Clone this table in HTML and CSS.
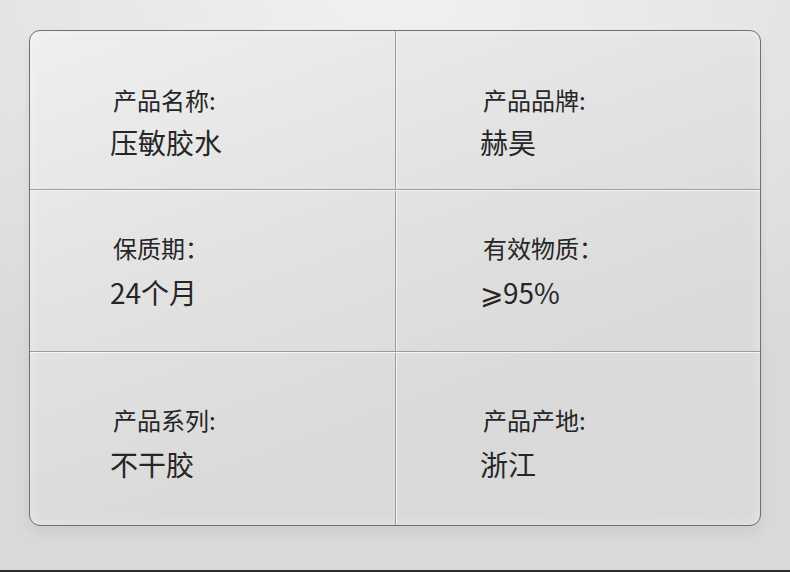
FILE: index.html
```html
<!DOCTYPE html>
<html lang="zh">
<head>
<meta charset="utf-8">
<link rel="stylesheet" href="styles.css">
</head>
<body>
<div class="page">
  <div class="card">
    <div class="row row1">
      <div class="cell"><div class="label">产品名称:</div><div class="value">压敏胶水</div></div>
      <div class="cell right"><div class="label">产品品牌:</div><div class="value">赫昊</div></div>
    </div>
    <div class="row row2">
      <div class="cell"><div class="label">保质期：</div><div class="value">24个月</div></div>
      <div class="cell right"><div class="label">有效物质：</div><div class="value">⩾95%</div></div>
    </div>
    <div class="row row3">
      <div class="cell"><div class="label">产品系列:</div><div class="value">不干胶</div></div>
      <div class="cell right"><div class="label">产品产地:</div><div class="value">浙江</div></div>
    </div>
  </div>
</div>
<div class="bottom-line"></div>
</body>
</html>
```
FILE: styles.css
```css
html, body {
  margin: 0;
  padding: 0;
}
body {
  width: 790px;
  height: 572px;
  overflow: hidden;
  background: radial-gradient(ellipse 700px 420px at 50% 0%, #f1f1f1 0%, #e6e6e6 50%, #d9d9d9 100%);
  font-family: "Noto Sans CJK SC", "Noto Sans", sans-serif;
  color: #262626;
  display: flex;
  flex-direction: column;
}
.page {
  flex: 1;
  padding: 30px 29px 0 29px;
}
.card {
  width: 732px;
  height: 496px;
  box-sizing: border-box;
  border: 1px solid #707070;
  border-radius: 11px;
  background: linear-gradient(160deg, #efefef 0%, #e2e2e2 40%, #dadada 70%, #d9d9d9 100%);
  box-shadow: 0 6px 12px rgba(0,0,0,0.06), inset 0 0 14px rgba(255,255,255,0.35);
  display: flex;
  flex-direction: column;
  overflow: hidden;
}
.row {
  display: flex;
}
.row1 {
  height: 158px;
  border-bottom: 1px solid #9c9c9c;
  box-shadow: 0 1px 0 #f6f6f6;
}
.row2 {
  height: 160px;
  margin-top: 1px;
  border-bottom: 1px solid #9c9c9c;
  box-shadow: 0 1px 0 #f6f6f6;
}
.row3 {
  flex: 1;
  margin-top: 1px;
}
.cell {
  width: 366px;
  box-sizing: border-box;
  padding-left: 80px;
  border-right: 1px solid #9c9c9c;
  box-shadow: 1px 0 0 #f3f3f3;
  display: flex;
  flex-direction: column;
}
.cell.right {
  flex: 1;
  border-right: none;
  box-shadow: none;
  margin-left: 1px;
  padding-left: 83px;
}
.row1 .cell { padding-top: 55px; gap: 12px; }
.row2 .cell { padding-top: 43px; gap: 14px; }
.row3 .cell { padding-top: 53px; gap: 14px; }
.label {
  font-size: 24px;
  line-height: 28px;
  margin-left: 3px;
}
.value {
  font-size: 28px;
  line-height: 32px;
}
.bottom-line {
  height: 2px;
  background: #2e2e2e;
}
```
